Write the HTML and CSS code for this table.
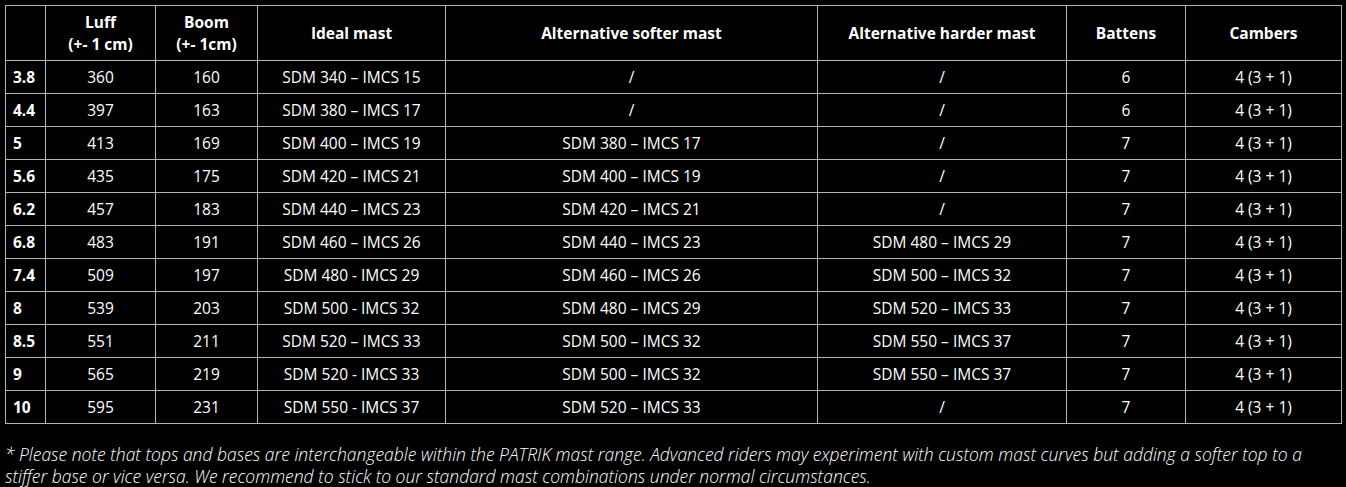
FILE: index.html
```html
<!DOCTYPE html>
<html>
<head>
<meta charset="utf-8">
<link rel="stylesheet" href="styles.css">
</head>
<body>
<div class="page">
<table class="spec">
<colgroup>
<col class="c-size"><col class="c-luff"><col class="c-boom"><col class="c-ideal"><col class="c-soft"><col class="c-hard"><col class="c-bat"><col class="c-cam">
</colgroup>
<thead>
<tr><th></th><th>Luff<br>(+- 1 cm)</th><th>Boom<br>(+- 1cm)</th><th>Ideal mast</th><th>Alternative softer mast</th><th>Alternative harder mast</th><th>Battens</th><th>Cambers</th></tr>
</thead>
<tbody>
<tr><th>3.8</th><td>360</td><td>160</td><td>SDM 340 – IMCS 15</td><td>/</td><td>/</td><td>6</td><td>4 (3 + 1)</td></tr>
<tr><th>4.4</th><td>397</td><td>163</td><td>SDM 380 – IMCS 17</td><td>/</td><td>/</td><td>6</td><td>4 (3 + 1)</td></tr>
<tr><th>5</th><td>413</td><td>169</td><td>SDM 400 – IMCS 19</td><td>SDM 380 – IMCS 17</td><td>/</td><td>7</td><td>4 (3 + 1)</td></tr>
<tr><th>5.6</th><td>435</td><td>175</td><td>SDM 420 – IMCS 21</td><td>SDM 400 – IMCS 19</td><td>/</td><td>7</td><td>4 (3 + 1)</td></tr>
<tr><th>6.2</th><td>457</td><td>183</td><td>SDM 440 – IMCS 23</td><td>SDM 420 – IMCS 21</td><td>/</td><td>7</td><td>4 (3 + 1)</td></tr>
<tr><th>6.8</th><td>483</td><td>191</td><td>SDM 460 – IMCS 26</td><td>SDM 440 – IMCS 23</td><td>SDM 480 – IMCS 29</td><td>7</td><td>4 (3 + 1)</td></tr>
<tr><th>7.4</th><td>509</td><td>197</td><td>SDM 480 - IMCS 29</td><td>SDM 460 – IMCS 26</td><td>SDM 500 – IMCS 32</td><td>7</td><td>4 (3 + 1)</td></tr>
<tr><th>8</th><td>539</td><td>203</td><td>SDM 500 - IMCS 32</td><td>SDM 480 – IMCS 29</td><td>SDM 520 – IMCS 33</td><td>7</td><td>4 (3 + 1)</td></tr>
<tr><th>8.5</th><td>551</td><td>211</td><td>SDM 520 – IMCS 33</td><td>SDM 500 – IMCS 32</td><td>SDM 550 – IMCS 37</td><td>7</td><td>4 (3 + 1)</td></tr>
<tr><th>9</th><td>565</td><td>219</td><td>SDM 520 - IMCS 33</td><td>SDM 500 – IMCS 32</td><td>SDM 550 – IMCS 37</td><td>7</td><td>4 (3 + 1)</td></tr>
<tr><th>10</th><td>595</td><td>231</td><td>SDM 550 - IMCS 37</td><td>SDM 520 – IMCS 33</td><td>/</td><td>7</td><td>4 (3 + 1)</td></tr>
</tbody>
</table>
<p class="note">* Please note that tops and bases are interchangeable within the PATRIK mast range. Advanced riders may experiment with custom mast curves but adding a softer top to a stiffer base or vice versa. We recommend to stick to our standard mast combinations under normal circumstances.</p>
</div>
</body>
</html>
```
FILE: styles.css
```css
html, body {
  margin: 0;
  padding: 0;
  background: #000;
}
.page {
  padding: 5px 0 0 5px;
  width: 1336px;
  color: #fff;
  font-family: "Open Sans", "Liberation Sans", sans-serif;
}
.spec {
  border-collapse: collapse;
  table-layout: fixed;
  width: 1336px;
  font-size: 15.5px;
}
.c-size { width: 40px; }
.c-luff { width: 110px; }
.c-boom { width: 102px; }
.c-ideal { width: 188px; }
.c-soft { width: 372px; }
.c-hard { width: 249px; }
.c-bat { width: 119px; }
.c-cam { width: 156px; }
.spec th, .spec td {
  border: 1px solid #b4b4b4;
  padding: 0;
  text-align: center;
  vertical-align: middle;
}
.spec thead th {
  height: 54px;
  font-weight: 700;
  line-height: 22px;
}
.spec td, .spec tbody th {
  height: 32px;
  font-weight: 400;
  line-height: 18px;
}
.spec tbody th {
  font-weight: 700;
  text-align: left;
  padding-left: 7px;
}
.note {
  margin: 19px 0 0;
  font-size: 17.5px;
  line-height: 22px;
  font-style: italic;
  font-weight: 300;
  width: 1320px;
}
```
